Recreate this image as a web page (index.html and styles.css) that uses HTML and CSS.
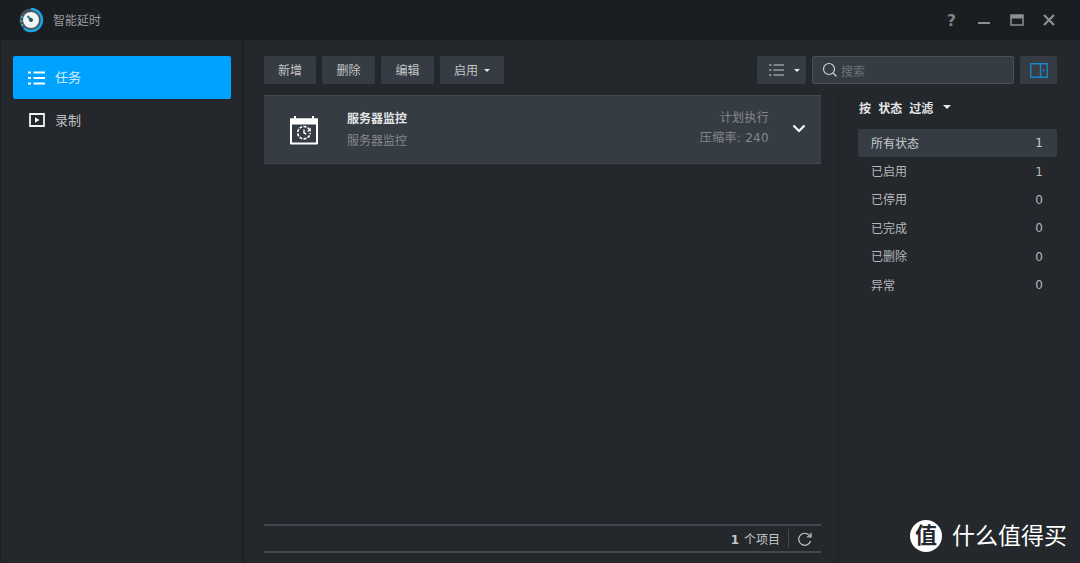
FILE: index.html
```html
<!DOCTYPE html>
<html lang="zh-CN">
  <head>
    <meta charset="UTF-8" />
    <title>智能延时</title>
    <link rel="stylesheet" href="styles.css">
  </head>
  <body>
    <div class="window">
      <header class="titlebar">
        <svg class="app-logo" width="26" height="26" viewBox="0 0 26 26">
          <circle cx="13" cy="13" r="11.5" fill="#46525c" />
          <path d="M13 2a11 11 0 0 1 0 22a11 11 0 0 1-7-2.500" fill="none" stroke="#19a6e0" stroke-width="2.400" />
          <circle cx="13" cy="13" r="8" fill="#f2f5f5" />
          <path d="M13 13L9.500 9" stroke="#2b7f86" stroke-width="2" />
          <circle cx="13" cy="13" r="2" fill="#24505a" />
          <circle cx="3.800" cy="10" r="1" fill="#2fc7c0" />
          <circle cx="3.400" cy="14" r="1" fill="#2fc7c0" />
          <circle cx="4.400" cy="18" r="1" fill="#2fc7c0" />
        </svg>
        <span class="app-title">智能延时</span>
        <div class="win-controls">
          <span class="win-help">?</span>
          <svg width="14" height="14" viewBox="0 0 14 14"><path d="M1 10h12" stroke="#8c8f93" stroke-width="2" /></svg>
          <svg width="14" height="14" viewBox="0 0 14 14"><path d="M1 2h12v10H1z" fill="none" stroke="#8c8f93" stroke-width="1.500" /><path d="M1 2h12v3.500H1z" fill="#8c8f93" /></svg>
          <svg width="14" height="14" viewBox="0 0 14 14"><path d="M2 2l10 10M12 2L2 12" stroke="#8c8f93" stroke-width="2.200" /></svg>
        </div>
      </header>

      <div class="body">
        <nav class="sidebar">
          <a class="nav-item active">
            <svg width="18" height="14" viewBox="0 0 18 14"><path d="M0 1.500h3M5.500 1.500H17M0 7h3M5.500 7H17M0 12.500h3M5.500 12.500H17" stroke="#fff" stroke-width="1.800" /></svg>
            <span>任务</span>
          </a>
          <a class="nav-item">
            <svg width="18" height="14" viewBox="0 0 16 14"><path d="M1 1h14v12H1z" fill="none" stroke="#f2f2f2" stroke-width="1.800" /><path d="M6 4.300l4.500 2.700L6 9.700z" fill="#f2f2f2" /></svg>
            <span>录制</span>
          </a>
        </nav>

        <main class="main">
          <div class="toolbar">
            <button class="btn btn-sm">新增</button>
            <button class="btn">删除</button>
            <button class="btn">编辑</button>
            <button class="btn btn-drop">启用<i class="caret"></i></button>
            <div class="toolbar-right">
              <button class="btn btn-view">
                <svg width="16" height="12" viewBox="0 0 16 12"><path d="M0 1h2.500M4.500 1H15M0 6h2.500M4.500 6H15M0 11h2.500M4.500 11H15" stroke="#c9cbcd" stroke-width="1.200" /></svg>
                <i class="caret"></i>
              </button>
              <div class="search">
                <svg width="16" height="16" viewBox="0 0 16 16"><circle cx="7" cy="7" r="5.500" fill="none" stroke="#d0d2d4" stroke-width="1.200" /><path d="M11 11l3.500 3.500" stroke="#d0d2d4" stroke-width="1.200" /></svg>
                <span>搜索</span>
              </div>
              <button class="btn btn-panel">
                <svg width="18" height="15" viewBox="0 0 18 15"><path d="M.75.75h16.500v13.500H.75zM10.500.75v13.500" fill="none" stroke="#1a85c8" stroke-width="1.400" /><path d="M12.800 6l2 1.500-2 1.500z" fill="#1a85c8" /></svg>
              </button>
            </div>
          </div>

          <div class="content">
            <section class="list-area">
              <div class="task-row">
                <svg class="task-icon" width="30" height="30" viewBox="0 0 30 30">
                  <path d="M2 4.500h26v24H2z" fill="none" stroke="#fff" stroke-width="2" stroke-linejoin="round" />
                  <path d="M2 4.500h26v4H2zM6 1v3M24 1v3" fill="#fff" stroke="#fff" stroke-width="2" />
                  <path d="M20.500 15a6.200 6.200 0 1 0 .6 3" fill="none" stroke="#fff" stroke-width="1.600" stroke-dasharray="3 1.300" />
                  <path d="M15 14.500v3.500l2.200 1" fill="none" stroke="#fff" stroke-width="1.400" />
                  <path d="M21.800 12.500v4h-4z" fill="#fff" />
                </svg>
                <div class="task-info">
                  <div class="task-name">服务器监控</div>
                  <div class="task-desc">服务器监控</div>
                </div>
                <div class="task-meta">
                  <div>计划执行</div>
                  <div>压缩率: 240</div>
                </div>
                <svg class="task-chevron" width="14" height="9" viewBox="0 0 14 9"><path d="M1.500 1.500L7 7l5.500-5.500" fill="none" stroke="#fff" stroke-width="2.200" /></svg>
              </div>
              <div class="list-spacer"></div>
              <div class="list-footer">
                <span><b>1</b> 个项目</span>
                <i class="footer-sep"></i>
                <svg width="14" height="14" viewBox="0 0 14 14"><path d="M12.500 9A6 6 0 1 1 11 3l1.500 1.300" fill="none" stroke="#c4c6c8" stroke-width="1.200" /><path d="M13 .8v4h-4" fill="none" stroke="#c4c6c8" stroke-width="1.200" /></svg>
              </div>
            </section>

            <aside class="filter">
              <div class="filter-title">按 状态 过滤<i class="caret"></i></div>
              <ul class="filter-list">
                <li class="selected"><span>所有状态</span><span>1</span></li>
                <li><span>已启用</span><span>1</span></li>
                <li><span>已停用</span><span>0</span></li>
                <li><span>已完成</span><span>0</span></li>
                <li><span>已删除</span><span>0</span></li>
                <li><span>异常</span><span>0</span></li>
              </ul>
            </aside>
          </div>
        </main>
      </div>

      <!-- watermark sits on top of the window corner -->
      <div class="watermark">
        <span class="watermark-badge">值</span>
        <span class="watermark-text">什么值得买</span>
      </div>
    </div>
  </body>
</html>
```

FILE: styles.css
```css
* {
  box-sizing: border-box;
}
html,
body {
  margin: 0;
  padding: 0;
  height: 100%;
  overflow: hidden;
}
body {
  font-family: "DejaVu Sans", "Noto Sans CJK SC", sans-serif;
  font-size: 12px;
  background-color: #24272c;
  color: #c4c6c8;
}
.window {
  position: relative;
  height: 563px;
  display: flex;
  flex-direction: column;
  border-left: 1px solid #1a1d22;
}
.titlebar {
  height: 40px;
  background-color: #1a1d22;
  display: flex;
  align-items: center;
  padding-left: 17px;
  flex-shrink: 0;
}
.app-title {
  margin: 0 0 2px 9px;
  color: #9a9c9f;
  font-size: 12px;
}
.win-controls {
  margin-left: auto;
  display: flex;
  align-items: center;
  gap: 18.500px;
  padding-right: 24px;
}
.win-help {
  width: 14px;
  text-align: center;
  font-size: 16px;
  font-weight: bold;
  color: #7f8286;
}
.body {
  flex: 1;
  display: flex;
  min-height: 0;
}
.sidebar {
  width: 243px;
  flex-shrink: 0;
  border-right: 2px solid #1c1f23;
  padding: 16px 11px 0 12px;
  display: flex;
  flex-direction: column;
}
.nav-item {
  height: 42px;
  display: flex;
  align-items: center;
  gap: 9px;
  padding-left: 15px;
  font-size: 13px;
  color: #bfc1c3;
  border-radius: 2px;
}
.nav-item span {
  margin-bottom: 2px;
}
.nav-item.active {
  height: 43px;
  background-color: #00a2ff;
  color: #d5eefc;
}
.main {
  flex: 1;
  display: flex;
  flex-direction: column;
  min-width: 0;
  padding: 16px 23px 0 20px;
}
.toolbar {
  display: flex;
  gap: 6px;
  height: 28px;
  flex-shrink: 0;
}
.toolbar-right {
  margin-left: auto;
  display: flex;
  gap: 6px;
}
.btn {
  height: 28px;
  width: 53px;
  padding: 0 0 2px;
  background-color: #363c44;
  border: none;
  border-radius: 2px;
  color: #c4c6c8;
  font-family: inherit;
  font-size: 12px;
  display: flex;
  align-items: center;
  justify-content: center;
}
.btn-sm {
  width: 52px;
}
.btn-drop {
  width: 64px;
}
.caret {
  display: inline-block;
  width: 0;
  height: 0;
  border-left: 3.500px solid transparent;
  border-right: 3.500px solid transparent;
  border-top: 3.500px solid #e6e6e6;
  margin-left: 6px;
}
.btn-drop .caret {
  margin-top: 2px;
}
.btn-view {
  width: 49px;
  padding: 0 0 0 5px;
  gap: 3px;
}
.btn-panel {
  width: 37px;
  padding: 0;
}
.search {
  width: 202px;
  height: 28px;
  background-color: #363c44;
  border: 1px solid #494f57;
  border-radius: 2px;
  display: flex;
  align-items: center;
  gap: 3px;
  padding-left: 9px;
  color: #6f7378;
}
.content {
  flex: 1;
  display: flex;
  margin-top: 11px;
  min-height: 0;
}
.list-area {
  width: 557px;
  flex-shrink: 0;
  display: flex;
  flex-direction: column;
}
.task-row {
  height: 69px;
  flex-shrink: 0;
  background-color: #363c44;
  border-top: 1px solid #43484f;
  border-bottom: 1px solid #43484f;
  display: flex;
  align-items: center;
  padding-left: 25px;
}
.task-icon {
  flex-shrink: 0;
}
.task-info {
  margin-left: 28px;
  padding-top: 2px;
  display: flex;
  flex-direction: column;
  gap: 5px;
}
.task-name {
  font-weight: bold;
  color: #e3e4e5;
  line-height: 17px;
}
.task-desc {
  color: #85888c;
  line-height: 17px;
}
.task-meta {
  margin-left: auto;
  padding-bottom: 4px;
  text-align: right;
  color: #85888c;
  line-height: 20px;
  letter-spacing: 0.3px;
}
.task-chevron {
  margin: 0 15px 2px 23px;
  flex-shrink: 0;
}
.list-spacer {
  flex: 1;
}
.list-footer {
  height: 29px;
  margin-bottom: 10px;
  border-top: 2px solid #44484e;
  border-bottom: 2px solid #44484e;
  display: flex;
  align-items: center;
  justify-content: flex-end;
  padding-right: 9px;
  font-size: 12px;
  word-spacing: 1px;
  color: #c4c6c8;
  flex-shrink: 0;
}
.footer-sep {
  width: 1px;
  height: 19px;
  background-color: #44484e;
  margin: 0 9px 0 8px;
}
.filter {
  flex: 1;
  margin-left: 17px;
  border-left: 1px solid #1c1f23;
  padding: 0 0 0 19px;
}
.filter-title {
  font-weight: bold;
  color: #e3e4e5;
  height: 26px;
  padding: 0 0 2px 1px;
  display: flex;
  align-items: center;
  word-spacing: 3px;
}
.filter-title .caret {
  margin-left: 10px;
  border-left-width: 4.500px;
  border-right-width: 4.500px;
  border-top-width: 4.500px;
}
.filter-list {
  list-style: none;
  margin: 8px 0 0;
  padding: 0;
}
.filter-list li {
  height: 28.400px;
  display: flex;
  align-items: center;
  justify-content: space-between;
  padding: 0 14px 0 13px;
  border-radius: 2px;
  color: #b6b8ba;
}
.filter-list li span:first-child {
  margin-bottom: 2px;
}
.filter-list li.selected {
  background-color: #363c44;
  color: #c9cbcd;
}
.watermark {
  position: absolute;
  right: 13px;
  bottom: 11px;
  display: flex;
  align-items: center;
  gap: 10px;
}
.watermark-badge {
  width: 32px;
  height: 32px;
  border-radius: 50%;
  background-color: #fff;
  color: #24272c;
  font-size: 22px;
  font-weight: bold;
  line-height: 32px;
  text-align: center;
}
.watermark-text {
  color: #fff;
  font-size: 23px;
  line-height: 32px;
}
```
